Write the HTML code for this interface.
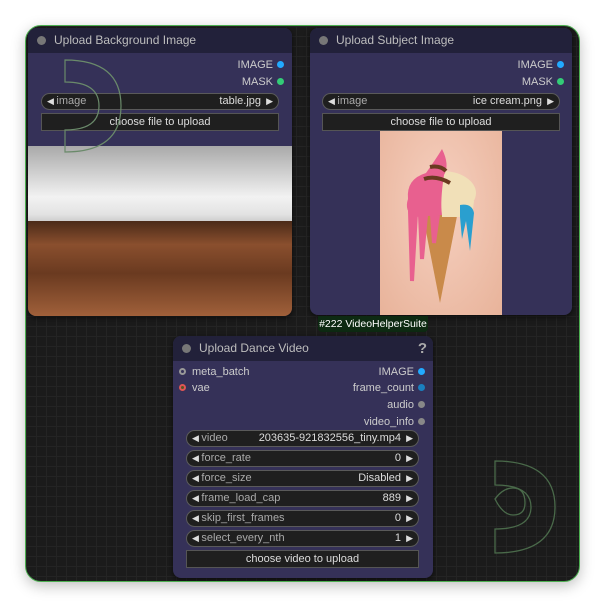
<!DOCTYPE html>
<html><head><meta charset="utf-8"><style>
*{margin:0;padding:0;box-sizing:border-box}
body{width:605px;height:608px;background:#fff;font-family:"Liberation Sans",sans-serif;position:relative;overflow:hidden}
.frame{position:absolute;left:25px;top:25px;width:555px;height:557px;border-radius:16px;border:1px solid #4caf50;background-color:#1b1b1b;background-image:linear-gradient(#242424 1px,transparent 1px),linear-gradient(90deg,#242424 1px,transparent 1px);background-size:10px 10px;overflow:hidden;box-shadow:0 4px 14px rgba(0,0,0,.25)}
.node{position:absolute;background:#353158;border-radius:8px;overflow:hidden;box-shadow:0 2px 6px rgba(0,0,0,.6)}
.hdr{height:25px;background:#22213a;color:#bdbdbd;font-size:12px;line-height:25px;padding-left:26px;position:relative}
.hdr:before{content:"";position:absolute;left:9px;top:8px;width:9px;height:9px;border-radius:50%;background:#777}
.out{position:absolute;right:8px;font-size:11px;color:#ccc;text-align:right}
.out i{display:inline-block;width:7px;height:7px;border-radius:50%;margin-left:4px;vertical-align:-0px}
.inp{position:absolute;left:6px;font-size:11px;color:#ccc}
.inp i{display:inline-block;width:7px;height:7px;border-radius:50%;margin-right:6px;border:2px solid #999}
.w{position:absolute;height:17px;background:#1f1f1f;border:1px solid #5a5a5a;border-radius:9px;font-size:11px;color:#ddd;line-height:15px}
.w .l{position:absolute;left:5px;color:#aaa}
.w .l:before{content:"◀ ";color:#ddd;font-size:9px}
.w .v{position:absolute;right:17px}
.w .r{position:absolute;right:5px;font-size:9px}
.b{position:absolute;height:18px;background:#1f1f1f;border:1px solid #555;font-size:11px;color:#ddd;text-align:center;line-height:16px}
</style></head><body>
<div class="frame">
<svg style="position:absolute;left:465px;top:433px" width="70" height="95" viewBox="0 0 70 95"><path d="M4 2 Q64 2 64 48 Q64 94 4 94 L4 70 Q40 70 40 48 Q40 26 4 26 Z" fill="none" stroke="#4a6a4a" stroke-width="1.3"/><path d="M4 44 Q12 33 22 33 Q34 33 34 48 Q34 60 22 60 Q12 60 4 44Z" fill="none" stroke="#4a6a4a" stroke-width="1.3" transform="translate(0,-4)"/></svg>

<div class="node" style="left:2px;top:2px;width:264px;height:288px">
<div class="hdr">Upload Background Image</div>
<div class="out" style="top:31px">IMAGE<i style="background:#22aaff"></i></div>
<div class="out" style="top:48px">MASK<i style="background:#33cc77"></i></div>
<div class="w" style="left:13px;top:65px;width:238px"><span class="l">image</span><span class="v">table.jpg</span><span class="r">▶</span></div>
<div class="b" style="left:13px;top:85px;width:238px">choose file to upload</div>
<div style="position:absolute;left:0;top:118px;width:264px;height:170px;background:linear-gradient(#a9a9a9 0%,#f2f2f2 30%,#e3e3e3 40%,#cfcfcf 44%,#4a2a18 44%,#8a4f2e 58%,#6a3a20 75%,#a0603a 100%)"></div>
<svg style="position:absolute;left:35px;top:30px" width="62" height="95" viewBox="0 0 62 95"><path d="M2 2 Q58 2 58 48 Q58 94 2 94 L2 72 Q36 72 36 48 Q36 24 2 24 Z" fill="none" stroke="#6a8a6a" stroke-width="1.2"/></svg>
</div>

<div class="node" style="left:284px;top:2px;width:262px;height:287px">
<div class="hdr">Upload Subject Image</div>
<div class="out" style="top:31px">IMAGE<i style="background:#22aaff"></i></div>
<div class="out" style="top:48px">MASK<i style="background:#33cc77"></i></div>
<div class="w" style="left:12px;top:65px;width:238px"><span class="l">image</span><span class="v">ice cream.png</span><span class="r">▶</span></div>
<div class="b" style="left:12px;top:85px;width:238px">choose file to upload</div>
<div style="position:absolute;left:70px;top:103px;width:122px;height:184px;background:radial-gradient(ellipse at 50% 40%,#f6d0c0,#e8b39a)">
<svg width="122" height="184" viewBox="0 0 122 184"><path d="M42 80 L60 172 L78 80Z" fill="#c98a4a"/><ellipse cx="62" cy="62" rx="34" ry="22" fill="#f1e0b8"/><path d="M28 68 Q26 48 46 42 Q56 28 62 18 Q70 34 64 44 Q60 70 62 84 L34 86 Q24 80 28 68Z" fill="#e8608f"/><path d="M62 70 Q80 64 94 70 L92 86 L62 86Z" fill="#f1e0b8"/><path d="M80 74 Q92 72 94 82 L90 120 L86 90 L82 108 L80 86Z" fill="#2a9fcf"/><path d="M30 80 L32 150 L36 82 M40 84 L42 128 L46 84 M52 84 L54 112 L58 84" stroke="#e8608f" stroke-width="4" fill="#e8608f"/><path d="M44 48 Q56 44 70 52 M50 36 Q60 34 66 40" stroke="#6a3a20" stroke-width="4" fill="none"/></svg>
</div>
</div>

<div style="position:absolute;left:292px;top:290px;width:110px;height:16px;background:#0d2a12;color:#fff;font-size:10.5px;line-height:16px;text-align:center;border-radius:0 0 4px 4px">#222 VideoHelperSuite</div>

<div class="node" style="left:147px;top:310px;width:260px;height:242px">
<div class="hdr">Upload Dance Video<span style="position:absolute;right:6px;top:0;font-size:15px;font-weight:bold;color:#aaa">?</span></div>
<div class="inp" style="top:30px"><i style="border-color:#999"></i>meta_batch</div>
<div class="inp" style="top:46px"><i style="border-color:#e05555;background:#552"></i>vae</div>
<div class="out" style="top:30px">IMAGE<i style="background:#22aaff"></i></div>
<div class="out" style="top:46px">frame_count<i style="background:#1a7fbf"></i></div>
<div class="out" style="top:63px">audio<i style="background:#888"></i></div>
<div class="out" style="top:80px">video_info<i style="background:#888"></i></div>
<div class="w" style="left:13px;top:94px;width:233px"><span class="l">video</span><span class="v">203635-921832556_tiny.mp4</span><span class="r">▶</span></div>
<div class="w" style="left:13px;top:114px;width:233px"><span class="l">force_rate</span><span class="v">0</span><span class="r">▶</span></div>
<div class="w" style="left:13px;top:134px;width:233px"><span class="l">force_size</span><span class="v">Disabled</span><span class="r">▶</span></div>
<div class="w" style="left:13px;top:154px;width:233px"><span class="l">frame_load_cap</span><span class="v">889</span><span class="r">▶</span></div>
<div class="w" style="left:13px;top:174px;width:233px"><span class="l">skip_first_frames</span><span class="v">0</span><span class="r">▶</span></div>
<div class="w" style="left:13px;top:194px;width:233px"><span class="l">select_every_nth</span><span class="v">1</span><span class="r">▶</span></div>
<div class="b" style="left:13px;top:214px;width:233px">choose video to upload</div>
</div>
</div>
</body></html>
